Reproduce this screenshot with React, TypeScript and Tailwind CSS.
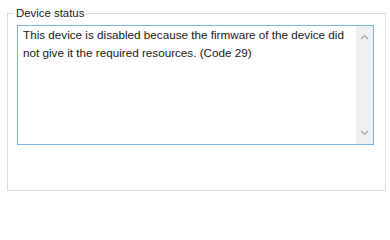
export default function App() {
    return (
        <div className="w-[390px] h-[200px] bg-white" style={{ fontFamily: '"Segoe UI", "Liberation Sans", Arial, sans-serif' }}>
            <div className="pt-[13px] pl-[7px]">
                <div className="relative w-[379px] h-[178px] border border-[#dcdcdc] pt-[11px] pl-[9px]">
                    <span className="absolute left-[6px] top-[-8px] bg-white px-[2px] text-[11.4px] leading-[14px] text-[#1a1a1a]">Device status</span>
                    <div className="w-[357px] h-[120px] border border-[#7eb4ea] flex bg-white">
                        <div className="flex-1 pl-[5px] pt-[0px] text-[11.7px] leading-[18px] text-[#1a1a1a]">
                            This device is disabled because the firmware of the device did not give it the required resources. (Code 29)
                        </div>
                        <div className="w-[17px] bg-[#f0f0f0] flex flex-col justify-between items-center pt-[8px] pb-[8px]">
                            <svg width="9" height="6" viewBox="0 0 9 6"><path d="M1 5 L4.5 1.5 L8 5" fill="none" stroke="#a6a6a6" strokeWidth="1.2" /></svg>
                            <svg width="9" height="6" viewBox="0 0 9 6"><path d="M1 1 L4.5 4.5 L8 1" fill="none" stroke="#a6a6a6" strokeWidth="1.2" /></svg>
                        </div>
                    </div>
                </div>
            </div>
        </div>
    );
}
